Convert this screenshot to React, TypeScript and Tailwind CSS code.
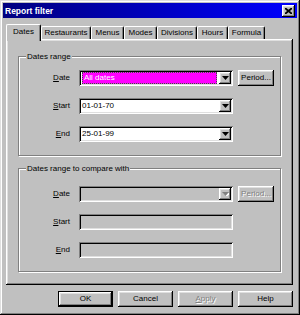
import React from "react";

const raised =
  "shadow-[inset_-1px_-1px_0_#000,inset_1px_1px_0_#fff,inset_-2px_-2px_0_#808080,inset_2px_2px_0_#dfdfdf]";
const sunken =
  "shadow-[inset_1px_1px_0_#808080,inset_-1px_-1px_0_#fff,inset_2px_2px_0_#000,inset_-2px_-2px_0_#dfdfdf]";
const disabledText = "text-[#808080] [text-shadow:1px_1px_0_#fff]";

function Arrow({ disabled }: { disabled?: boolean }) {
  return (
    <div className={`flex h-full w-[12px] shrink-0 items-center justify-center bg-[#c0c0c0] ${raised}`}>
      <svg width="7" height="4" viewBox="0 0 7 4">
        {disabled && <polygon points="1,1 8,1 4.5,5" fill="#fff" />}
        <polygon points="0,0 7,0 3.5,4" fill={disabled ? "#808080" : "#000"} />
      </svg>
    </div>
  );
}

function Combo({ children, disabled }: { children?: React.ReactNode; disabled?: boolean }) {
  return (
    <div className={`flex h-[16px] w-[154px] p-[2px] ${sunken} ${disabled ? "bg-[#c0c0c0]" : "bg-white"}`}>
      <div className="flex min-w-0 flex-1 items-center">{children}</div>
      <Arrow disabled={disabled} />
    </div>
  );
}

function Field() {
  return <div className={`h-[16px] w-[154px] bg-[#c0c0c0] ${sunken}`} />;
}

function Btn({
  children,
  w,
  h = "h-[16px]",
  disabled,
}: {
  children: React.ReactNode;
  w: string;
  h?: string;
  disabled?: boolean;
}) {
  return (
    <div className={`flex ${h} ${w} items-center justify-center bg-[#c0c0c0] ${raised} ${disabled ? disabledText : ""}`}>
      {children}
    </div>
  );
}

function Label({ m, rest }: { m: string; rest: string }) {
  return (
    <div className="w-[51px] text-right">
      <span className="underline underline-offset-[1px]">{m}</span>
      {rest}
    </div>
  );
}

function Group({
  title,
  children,
  pt,
}: {
  title: string;
  children: React.ReactNode;
  pt: string;
}) {
  return (
    <div className={`relative border border-[#808080] shadow-[inset_1px_1px_0_#fff,1px_1px_0_#fff] ${pt} pb-[13px]`}>
      <div className="absolute left-[7px] top-[-6px] bg-[#c0c0c0] px-[1px] leading-[11px]">{title}</div>
      <div className="flex flex-col gap-[12px]">{children}</div>
    </div>
  );
}

function Row({ children }: { children: React.ReactNode }) {
  return <div className="flex items-center">{children}</div>;
}

const tabs = [
  { t: "Dates", w: "w-[35px]" },
  { t: "Restaurants", w: "w-[50px]" },
  { t: "Menus", w: "w-[33px]" },
  { t: "Modes", w: "w-[33px]" },
  { t: "Divisions", w: "w-[40px]" },
  { t: "Hours", w: "w-[31px]" },
  { t: "Formula", w: "w-[37px]" },
];

export default function App() {
  return (
    <div
      className={`flex h-[315px] w-[300px] flex-col bg-[#c0c0c0] p-[3px] font-['Liberation_Sans',Arial,sans-serif] text-[8px] leading-[10px] text-black shadow-[inset_-1px_-1px_0_#000,inset_1px_1px_0_#dfdfdf,inset_-2px_-2px_0_#808080,inset_2px_2px_0_#fff]`}
    >
      {/* Title bar */}
      <div className="flex h-[15px] shrink-0 items-center justify-between bg-linear-to-r from-[#000080] to-[#0000ff] pl-[2px] pr-[2px]">
        <span className="text-[8.5px] font-bold text-white">Report filter</span>
        <div className={`flex h-[12px] w-[13px] items-center justify-center bg-[#c0c0c0] ${raised}`}>
          <svg width="7" height="6" viewBox="0 0 7 6">
            <path d="M0 0 L7 6 M7 0 L0 6" stroke="#000" strokeWidth="1.8" />
          </svg>
        </div>
      </div>

      <div className="flex flex-col pl-[3px] pr-[4px]">
        {/* Tabs */}
        <div className="flex h-[21px] items-end">
          {tabs.map((tab, i) => (
            <div
              key={tab.t}
              className={`flex ${tab.w} items-center justify-center rounded-t-[2px] border-l border-r border-t border-l-white border-r-black border-t-white bg-[#c0c0c0] shadow-[inset_-1px_0_0_#808080] ${
                i === 0 ? "relative z-10 -mb-[2px] h-[17px] pb-[2px]" : "h-[13px]"
              }`}
            >
              {tab.t}
            </div>
          ))}
        </div>

        {/* Panel */}
        <div className={`flex h-[246px] flex-col gap-[12px] px-[12px] pt-[17px] ${raised}`}>
          <Group title="Dates range" pt="pt-[13px]">
            <Row>
              <Label m="D" rest="ate" />
              <div className="ml-[9px]">
                <Combo>
                  <div className="ml-[1px] mr-[2px] flex h-full flex-1 items-center border border-dotted border-[#3a5a3a] bg-[#ff00ff] pl-[1px] text-white">
                    All dates
                  </div>
                </Combo>
              </div>
              <div className="ml-[5px]">
                <Btn w="w-[36px]">Period...</Btn>
              </div>
            </Row>
            <Row>
              <Label m="S" rest="tart" />
              <div className="ml-[9px]">
                <Combo>
                  <span className="pl-[1px]">01-01-70</span>
                </Combo>
              </div>
            </Row>
            <Row>
              <Label m="E" rest="nd" />
              <div className="ml-[9px]">
                <Combo>
                  <span className="pl-[1px]">25-01-99</span>
                </Combo>
              </div>
            </Row>
          </Group>

          <Group title="Dates range to compare with" pt="pt-[17px]">
            <Row>
              <Label m="D" rest="ate" />
              <div className="ml-[9px]">
                <Combo disabled />
              </div>
              <div className="ml-[5px]">
                <Btn w="w-[36px]" disabled>
                  Period...
                </Btn>
              </div>
            </Row>
            <Row>
              <Label m="S" rest="tart" />
              <div className="ml-[9px]">
                <Field />
              </div>
            </Row>
            <Row>
              <Label m="E" rest="nd" />
              <div className="ml-[9px]">
                <Field />
              </div>
            </Row>
          </Group>
        </div>

        {/* Buttons */}
        <div className="mt-[6px] flex justify-end gap-[5px]">
          <div className="border border-black">
            <Btn w="w-[53px]" h="h-[14px]">
              OK
            </Btn>
          </div>
          <Btn w="w-[55px]">Cancel</Btn>
          <Btn w="w-[55px]" disabled>
            <span>
              <span className="underline underline-offset-[1px]">A</span>pply
            </span>
          </Btn>
          <Btn w="w-[55px]">Help</Btn>
        </div>
      </div>
    </div>
  );
}
